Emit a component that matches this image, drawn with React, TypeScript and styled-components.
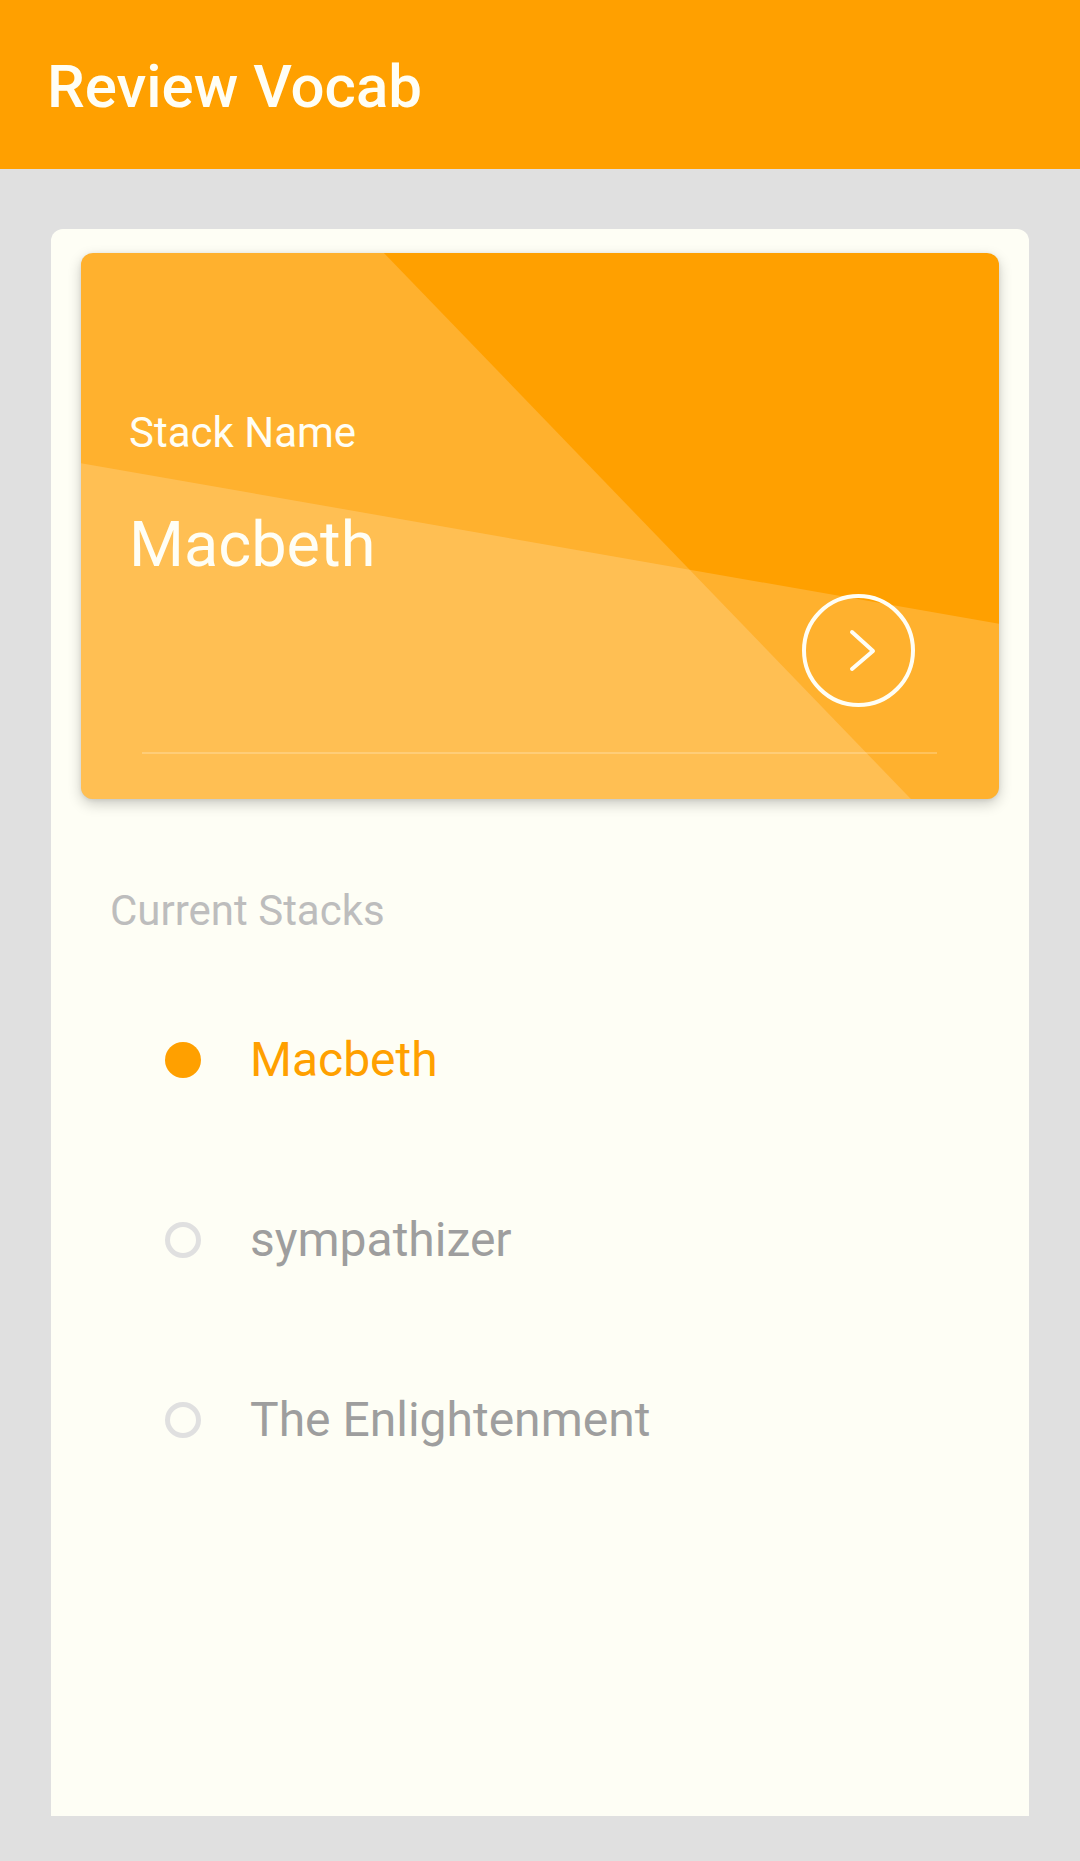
import React from "react";
import styled, { createGlobalStyle } from "styled-components";

const GlobalStyle = createGlobalStyle`
  html, body {
    margin: 0;
    padding: 0;
    background: #e0e0e0;
    font-family: Roboto, "Noto Sans", Arial, sans-serif;
  }
  * { box-sizing: border-box; }
`;

const Page = styled.div`
  display: flex;
  flex-direction: column;
  height: 1861px;
  background: #e0e0e0;
`;

const AppBar = styled.header`
  height: 169px;
  flex: 0 0 auto;
  background: #ffa000;
  padding: 57px 0 0 47px;
`;

const Title = styled.h1`
  margin: 0;
  font-size: 60px;
  line-height: 60px;
  font-weight: 500;
  color: #fffef5;
  letter-spacing: 0;
`;

const Main = styled.main`
  flex: 1;
  display: flex;
  padding: 60px 51px 45px;
`;

const Panel = styled.section`
  flex: 1;
  background: #fefef5;
  border-radius: 12px 12px 0 0;
  padding: 24px 30px 0;
  display: flex;
  flex-direction: column;
`;

const Card = styled.div`
  position: relative;
  height: 546px;
  border-radius: 12px;
  overflow: hidden;
  background: #ffa000;
  box-shadow: 0 5px 14px rgba(0, 0, 0, 0.2), 0 1px 4px rgba(0, 0, 0, 0.08);
  display: flex;
  flex-direction: column;
  padding: 159px 0 0 48px;
  color: #fffef5;

  &::before,
  &::after {
    content: "";
    position: absolute;
    inset: 0;
    background: rgba(255, 255, 255, 0.18);
    pointer-events: none;
  }
  &::before {
    clip-path: polygon(0 0, 33% 0, 90.4% 100%, 0 100%);
  }
  &::after {
    clip-path: polygon(0 38.5%, 100% 67.9%, 100% 100%, 0 100%);
  }
`;

const CardLabel = styled.div`
  position: relative;
  z-index: 1;
  font-size: 42px;
  line-height: 42px;
  font-weight: 400;
`;

const CardName = styled.div`
  position: relative;
  z-index: 1;
  margin-top: 59px;
  font-size: 63px;
  line-height: 63px;
  font-weight: 400;
`;

const ActionRow = styled.div`
  position: relative;
  z-index: 1;
  display: flex;
  justify-content: flex-end;
  margin-top: 18px;
  padding-right: 84px;
`;

const NextButton = styled.button`
  width: 113px;
  height: 113px;
  border-radius: 50%;
  border: 4px solid #fffef5;
  background: transparent;
  padding: 0;
  display: flex;
  align-items: center;
  justify-content: center;
  cursor: pointer;
`;

const Divider = styled.div`
  position: relative;
  z-index: 1;
  height: 2px;
  margin: 45px 62px 0 13px;
  background: rgba(255, 255, 255, 0.22);
`;

const SectionLabel = styled.div`
  margin: 91px 0 0 29px;
  font-size: 42px;
  line-height: 42px;
  color: #bdbdbd;
`;

const List = styled.ul`
  list-style: none;
  margin: 38px 0 0;
  padding: 0 0 0 84px;
`;

const Row = styled.li`
  height: 180px;
  display: flex;
  align-items: center;
  gap: 49px;
`;

const Radio = styled.span<{ $checked: boolean }>`
  flex: 0 0 auto;
  width: 36px;
  height: 36px;
  border-radius: 50%;
  background: ${(p) => (p.$checked ? "#ffa000" : "transparent")};
  border: ${(p) => (p.$checked ? "none" : "5px solid #e0e0e0")};
`;

const RowText = styled.span<{ $checked: boolean }>`
  font-size: 48px;
  line-height: 48px;
  color: ${(p) => (p.$checked ? "#ffa000" : "#9e9e9e")};
`;

const stacks = ["Macbeth", "sympathizer", "The Enlightenment"];

export default function App() {
  const selected = 0;
  return (
    <>
      <GlobalStyle />
      <Page>
        <AppBar>
          <Title>Review Vocab</Title>
        </AppBar>
        <Main>
          <Panel>
            <Card>
              <CardLabel>Stack Name</CardLabel>
              <CardName>{stacks[selected]}</CardName>
              <ActionRow>
                <NextButton aria-label="Next">
                  <svg width="44" height="44" viewBox="0 0 44 44" fill="none">
                    <polyline
                      points="15,3 36,22 15,40"
                      stroke="#fffef5"
                      strokeWidth="4"
                      strokeLinecap="round"
                      strokeLinejoin="round"
                    />
                  </svg>
                </NextButton>
              </ActionRow>
              <Divider />
            </Card>
            <SectionLabel>Current Stacks</SectionLabel>
            <List>
              {stacks.map((s, i) => (
                <Row key={s}>
                  <Radio $checked={i === selected} />
                  <RowText $checked={i === selected}>{s}</RowText>
                </Row>
              ))}
            </List>
          </Panel>
        </Main>
      </Page>
    </>
  );
}
